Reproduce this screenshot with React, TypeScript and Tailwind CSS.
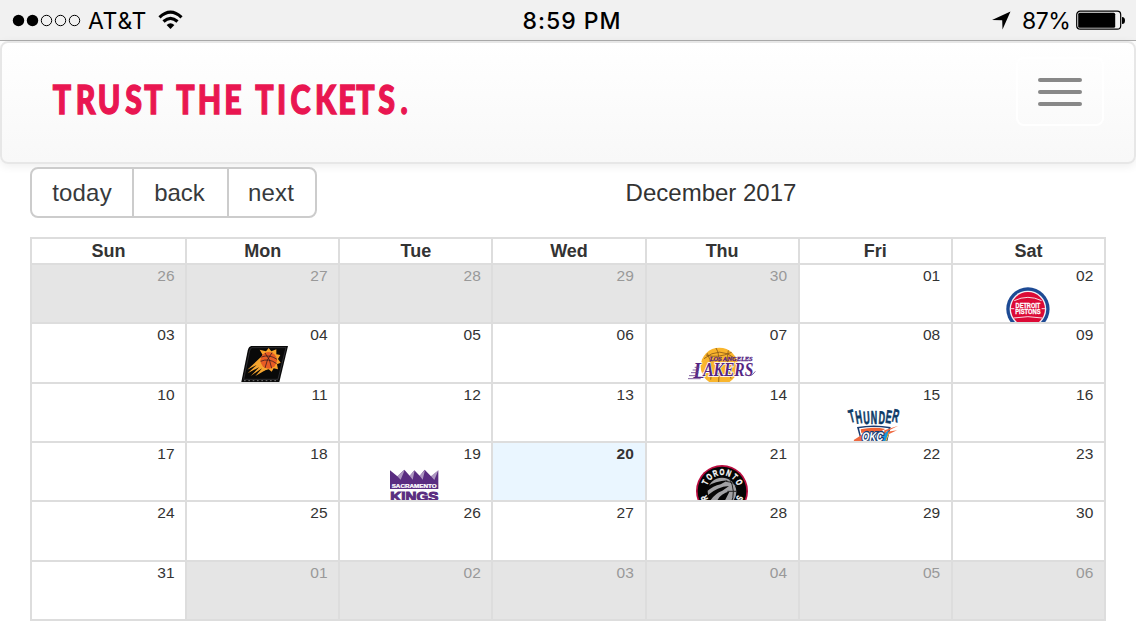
import type { ReactNode } from "react";

function Pistons() {
  return (
    <svg viewBox="7.2 21 216 108" className="h-9 w-[72px] shrink-0">
      <circle cx="115" cy="87" r="65" fill="#1d4a94" />
      <circle cx="115" cy="87" r="55" fill="#f4f1f6" />
      <circle cx="115" cy="87" r="51" fill="#dc0a36" />
      <g fill="none" stroke="#f8dbe2" strokeWidth="3">
        <path d="M74 62Q115 42 156 62M63 86H74M156 86H167M72 114Q115 106 158 114" />
      </g>
      <g fill="#fff" fontFamily="Liberation Sans, sans-serif" fontWeight="700" fontSize="20" stroke="#fff" strokeWidth=".8">
        <text x="78" y="83" textLength="74" lengthAdjust="spacingAndGlyphs">DETROIT</text>
        <text x="77" y="103" textLength="76" lengthAdjust="spacingAndGlyphs">PISTONS</text>
      </g>
    </svg>
  );
}

function Suns() {
  return (
    <svg viewBox="5 34 216 108" className="h-9 w-[72px] shrink-0">
      <path d="M78 34H188L162 142H48L67 48Q70 35 78 34Z" fill="#090909" />
      <path d="M80 39H182L158 134H55L73 48Q75 40 80 39Z" fill="none" stroke="#55535a" strokeWidth="1.5" />
      <path d="M112 61 103 45 122 50 130 40 138 50 153 44 153 59 165 61 158 73 166 84 155 89 158 104 145 101 139 111 130 104 113 108 107 98 97 82Z" fill="#f9a32a" />
      <path d="M106 68 66 105 94 91 67 116 102 97 76 124 111 100 90 124 125 104Z" fill="#f5a52f" />
      <circle cx="130" cy="77" r="25" fill="#e75c24" />
      <path d="M108 67Q132 58 155 74M106 80Q130 69 154 87M119 55Q135 72 139 101M140 54Q123 75 119 100" fill="none" stroke="#2a1720" strokeWidth="2.2" />
      <path d="M56 138H158" stroke="#888" strokeWidth="2.5" strokeDasharray="5 8" />
    </svg>
  );
}

function Lakers() {
  return (
    <svg viewBox="18 34 216 108" className="h-9 w-[72px] shrink-0">
      <circle cx="118" cy="95" r="56" fill="#f9b52c" />
      <path d="M72 72Q119 33 166 72M78 61Q113 72 155 53M108 40Q122 55 116 142M82 56Q100 92 92 135M145 47Q137 81 153 132" fill="none" stroke="#8b5a18" strokeWidth="2.5" />
      <g fontFamily="Liberation Serif, serif" fontWeight="700" fontStyle="italic" fill="#552583">
        <text x="89" y="80" fontSize="17" textLength="129" lengthAdjust="spacingAndGlyphs" stroke="#552583" strokeWidth=".8">LOS ANGELES</text>
        <text x="40" y="130" fontSize="72" textLength="180" lengthAdjust="spacingAndGlyphs" stroke="#fff" strokeWidth="5" paintOrder="stroke">
          L<tspan fontSize="58" dy="-6" dx="-7">AKERS</tspan>
        </text>
      </g>
      <path d="M44 98H58M38 106H57M33 114H55M27 123H53M24 132H62M200 121Q213 129 226 110" fill="none" stroke="#68408b" strokeWidth="2.5" />
    </svg>
  );
}

function Thunder() {
  const letters: [string, number, number, number][] = [
    ["T", 55, 80, -14],
    ["H", 75, 84, -9],
    ["U", 97, 86, -4],
    ["N", 118, 87, 0],
    ["D", 140, 86, 4],
    ["E", 160, 83, 8],
    ["R", 179, 79, 13],
  ];
  return (
    <svg viewBox="13 32 216 108" className="h-9 w-[72px] shrink-0">
      <g fill="#0b3a66" stroke="#0b3a66" strokeWidth="2" fontFamily="Liberation Sans, sans-serif" fontWeight="700" fontSize="54" textAnchor="middle">
        {letters.map(([c, x, y, r]) => (
          <text key={c} transform={`translate(${x} ${y}) rotate(${r}) scale(.49 1)`}>{c}</text>
        ))}
      </g>
      <path d="M67 95Q117 86 168 95L157 142H80Z" fill="#173a70" />
      <path d="M73 99Q117 91 162 99L151 142H84Z" fill="#fff" />
      <path d="M78 102Q117 93 152 101L133 111Q99 106 80 113Z" fill="#ef6132" />
      <path d="M57 134Q78 121 86 116L80 142H60ZM149 105 191 91 153 110 187 105 146 124Z" fill="#ef6940" />
      <path d="M143 121 162 104 153 142H139Z" fill="#159bdb" />
      <path d="M152 142 162 114" stroke="#fdbb30" strokeWidth="3" />
      <text transform="translate(80 136) skewX(-10)" fontFamily="Liberation Sans, sans-serif" fontWeight="700" fontSize="38" fill="#fff" stroke="#173a70" strokeWidth="8" paintOrder="stroke" textLength="64" lengthAdjust="spacingAndGlyphs">OKC</text>
    </svg>
  );
}

function Kings() {
  return (
    <svg viewBox="0 15 216 108" className="h-9 w-[72px] shrink-0">
      <path d="M30 31 52 49 73 29 89 47 103 31 119 47 134 29 153 49 175 31V87H30Z" fill="#5a2d81" />
      <path d="M52 49 74 30 62 59ZM89 47 104 31 98 59ZM119 47 135 30 128 59ZM153 49 175 31 163 60Z" fill="#fff" opacity=".5" />
      <g fontFamily="Liberation Sans, sans-serif" fontWeight="700">
        <text x="35" y="83" fontSize="15" fill="#fff" stroke="#fff" strokeWidth=".7" textLength="135" lengthAdjust="spacingAndGlyphs">SACRAMENTO</text>
        <text x="31" y="124" fontSize="39" fill="#5a2d81" stroke="#5a2d81" strokeWidth="3" textLength="144" lengthAdjust="spacingAndGlyphs">KINGS</text>
      </g>
    </svg>
  );
}

function Raptors() {
  return (
    <svg viewBox="3 30 216 108" className="h-9 w-[72px] shrink-0">
      <circle cx="111" cy="108" r="78" fill="#ba0c3f" />
      <circle cx="111" cy="108" r="73" fill="#050505" />
      <circle cx="111" cy="111" r="43" fill="#a1a1a4" />
      <path d="M68 94Q88 79 129 76L107 88Q84 93 67 108ZM68 121Q97 95 132 93L112 107Q88 116 74 140ZM96 138Q105 117 134 109L119 138Z" fill="#050505" />
      <path d="M133 70Q155 109 137 148M123 79Q148 82 154 95M127 109H155" fill="none" stroke="#222" strokeWidth="3" />
      <g fill="#fff" stroke="#fff" fontFamily="Liberation Sans, sans-serif" fontWeight="700" fontSize="27" textAnchor="middle">
        {["T", "O", "R", "O", "N", "T", "O"].map((c, i) => (
          <text key={i} transform={`rotate(${(i - 3) * 21} 111 108) translate(111 60) scale(.7 1)`}>{c}</text>
        ))}
        <text transform="rotate(-112 111 108) translate(111 60) scale(.7 1)">R</text>
        <text transform="rotate(112 111 108) translate(111 60) scale(.7 1)">S</text>
      </g>
    </svg>
  );
}

const games: Record<string, ReactNode> = {
  "0-6": <Pistons />,
  "1-1": <Suns />,
  "1-4": <Lakers />,
  "2-5": <Thunder />,
  "3-2": <Kings />,
  "3-4": <Raptors />,
};

const weekdays = ["Sun", "Mon", "Tue", "Wed", "Thu", "Fri", "Sat"];

const days = Array.from({ length: 42 }, (_, i) => {
  const day = i < 5 ? 26 + i : i < 36 ? i - 4 : i - 35;
  return { label: String(day).padStart(2, "0"), outside: i < 5 || i >= 36, today: i === 24, column: i % 7, row: Math.floor(i / 7) };
});

const logoLetters: [string, number][] = [
  ["T", 62], ["R", 85.5], ["U", 109], ["S", 133.5], ["T", 153.5],
  ["T", 185.5], ["H", 209.5], ["E", 233],
  ["T", 264.5], ["I", 281.5], ["C", 300.5], ["K", 325.5], ["E", 347], ["T", 365.5], ["S", 386.5], [".", 404],
];

function StatusBar() {
  return (
    <div className="flex h-[41px] items-center justify-between border-b border-[#acacac] bg-[#f1f1f1] pr-[11px] pl-3 font-['Inter',sans-serif] text-black">
      <div className="flex w-[300px] items-center">
        <svg viewBox="0 0 70 14" className="h-[14px] w-[70px]">
          {[6.5, 20.5, 34.5, 48.5, 62.5].map((x, i) => (
            <circle key={x} cx={x} cy="7.5" r={i < 2 ? 5.7 : 5.2} fill={i < 2 ? "#000" : "none"} stroke={i < 2 ? "none" : "#000"} />
          ))}
        </svg>
        <span className="ml-[6px] w-[58px] pt-[2px] text-[23px] leading-6 tracking-[0.7px]">AT&amp;T</span>
        <svg viewBox="0 0 26 20" className="ml-3 h-5 w-[26px]" fill="none" stroke="#000" strokeWidth="3.2">
          <path d="M1.5 7.3Q12.5-3 23.5 7.3M5.5 11.5Q12.5 5.3 19.5 11.5" />
          <path d="M8.6 15Q12.5 11.7 16.4 15L12.5 19Z" fill="#000" stroke="none" />
        </svg>
      </div>
      <span className="pt-[2px] pl-[7px] text-[23px] font-medium tracking-[1px]">8:59 PM</span>
      <div className="flex w-[300px] items-center justify-end">
        <svg viewBox="0 0 20 20" className="mr-[10px] h-5 w-5"><path d="M0 10 18.5 1.5 10.5 19.5 10.2 10.2Z" /></svg>
        <span className="w-[49px] pt-[2px] text-[23px] tracking-[-0.5px]">87%</span>
        <svg viewBox="0 0 49 20" className="ml-[5px] h-5 w-[49px]">
          <rect x=".7" y="1.2" width="44" height="18" rx="3.5" fill="none" stroke="#000" strokeWidth="1.2" />
          <rect x="2.2" y="2.8" width="37" height="15" rx="1.5" />
          <path d="M46 7Q49 7 49 10.5Q49 14 46 14Z" />
        </svg>
      </div>
    </div>
  );
}

export default function App() {
  return (
    <main className="h-[640px] overflow-hidden bg-white font-['Liberation_Sans',Arial,sans-serif] text-[#333]">
      <StatusBar />
      <nav className="flex h-[123px] items-start justify-between rounded-lg border-2 border-[#e7e7e7] bg-linear-to-b from-white to-[#f8f8f8] pt-[14px] pr-[30px] shadow-[0_2px_10px_rgba(0,0,0,0.075)]">
        <svg viewBox="2 57 420 70" className="h-[70px] w-[420px]" role="img" aria-label="Trust the tickets.">
          <g fill="#e91651" stroke="#e91651" strokeWidth="1.4" fontFamily="Lato, sans-serif" fontWeight="900" fontSize="40" textAnchor="middle">
            {logoLetters.map(([c, x]) => (
              <text key={x} transform={`translate(${x} 113.8) scale(.76 1)`}>{c}</text>
            ))}
          </g>
        </svg>
        <button aria-label="Toggle navigation" className="flex h-[69px] w-[88px] flex-col items-center gap-2 rounded-lg border-2 border-white pt-[19px]">
          <span className="h-1 w-11 rounded-xs bg-[#888]" />
          <span className="h-1 w-11 rounded-xs bg-[#888]" />
          <span className="h-1 w-11 rounded-xs bg-[#888]" />
        </button>
      </nav>
      <section className="px-[30px] pt-[3px]">
        <div className="flex h-[51px] items-center">
          <div className="flex h-[51px] w-[287px] divide-x-2 divide-[#ccc] rounded-lg border-2 border-[#ccc] bg-white text-2xl text-[#373a3c]">
            <button className="w-[102px] tracking-[0.2px]">today</button>
            <button className="w-[95px] pr-[2px]">back</button>
            <button className="flex-1 pr-[2px] tracking-[0.2px]">next</button>
          </div>
          <h1 className="flex-1 pr-px text-center text-2xl">December 2017</h1>
        </div>
        <div className="mt-[19px] h-[384px] border-2 border-[#ddd]">
          <div className="grid h-6 grid-cols-7">
            {weekdays.map((d, i) => (
              <div key={d} className={`text-center text-[18px] leading-6 font-bold ${i ? "border-l-2 border-[#ddd]" : ""}`}>{d}</div>
            ))}
          </div>
          <div className="grid h-[356px] grid-cols-7 grid-rows-6">
            {days.map((d) => (
              <div
                key={`${d.row}-${d.column}`}
                className={`flex min-h-0 flex-col items-center overflow-hidden border-t-2 border-[#ddd] ${d.column ? "border-l-2" : ""} ${d.outside ? "bg-[#e5e5e5] text-[#999]" : d.today ? "bg-[#eaf6ff] font-bold" : ""}`}
              >
                <div className="h-[22px] w-full shrink-0 pr-[10.5px] text-right text-[15.5px] leading-[22px] tracking-[0.1px]">{d.label}</div>
                {games[`${d.row}-${d.column}`]}
              </div>
            ))}
          </div>
        </div>
      </section>
    </main>
  );
}
